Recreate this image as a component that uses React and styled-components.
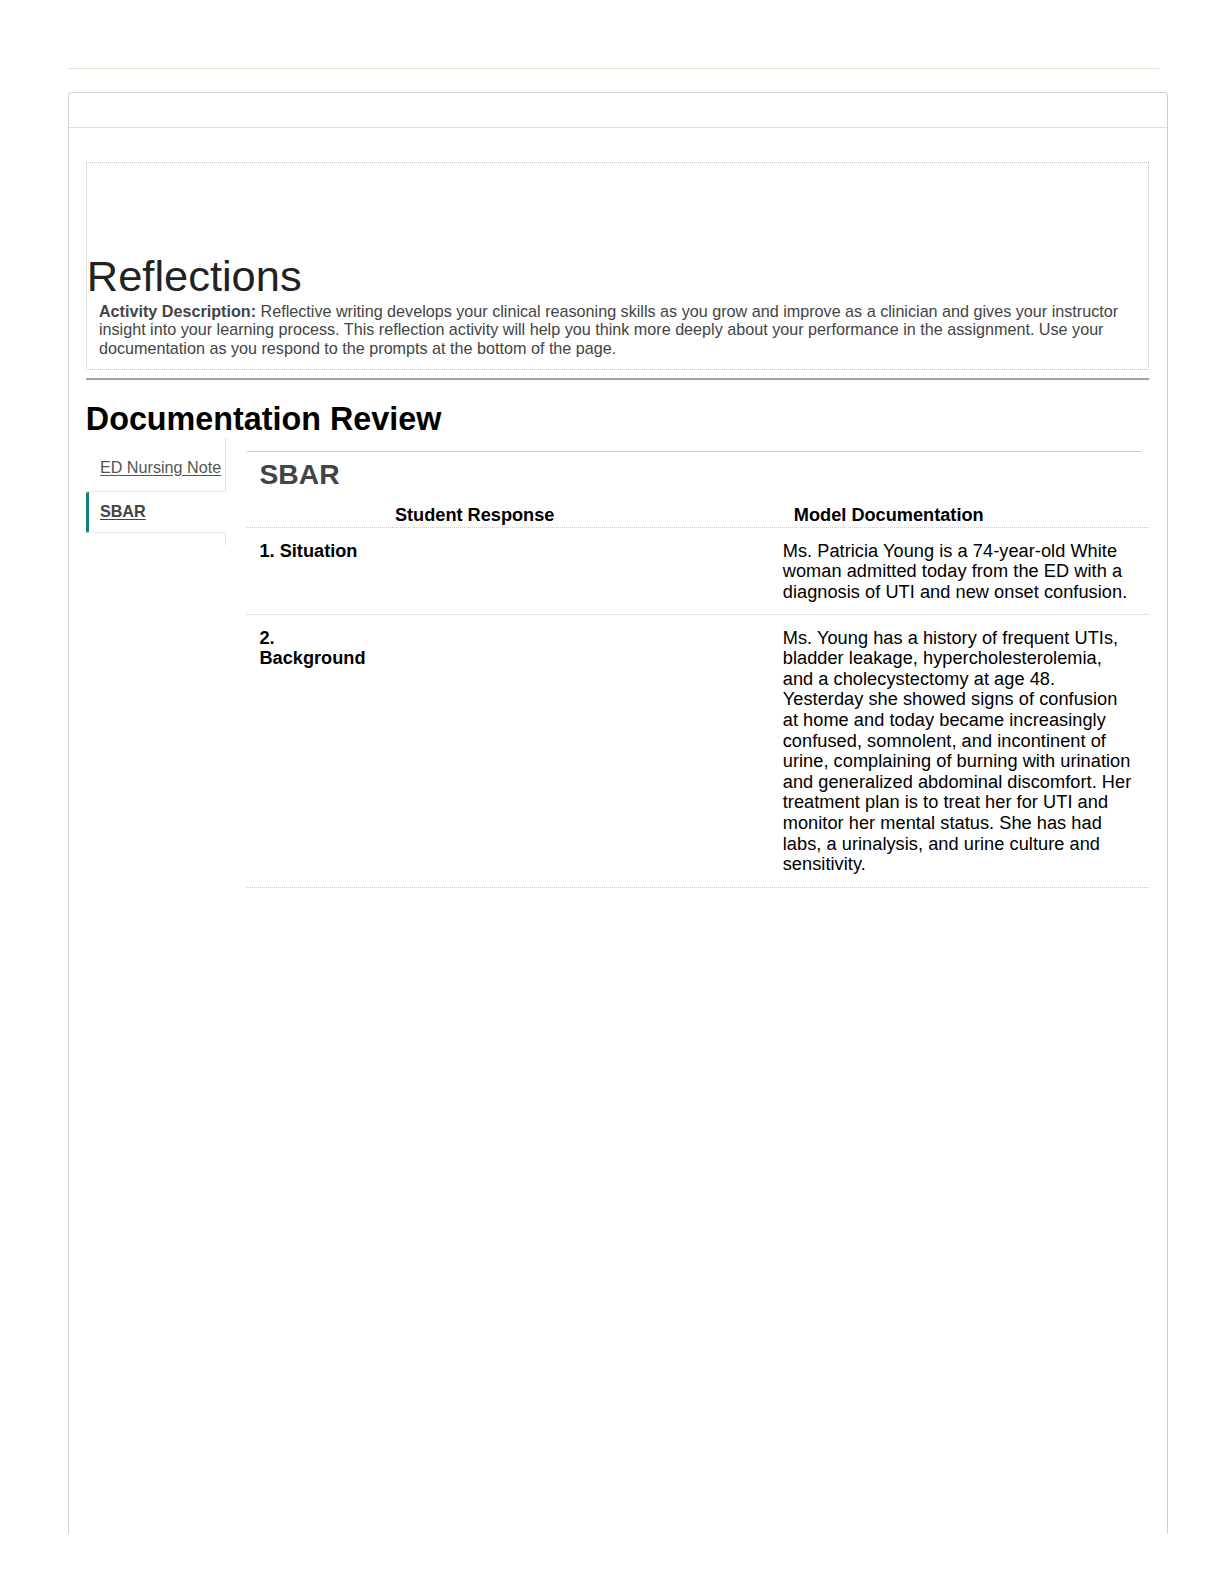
import React from "react";
import styled, { createGlobalStyle } from "styled-components";

const GlobalStyle = createGlobalStyle`
  html, body {
    margin: 0;
    padding: 0;
    background: #ffffff;
    font-family: "Liberation Sans", Arial, Helvetica, sans-serif;
  }
  * { box-sizing: border-box; }
`;

const Page = styled.div`
  zoom: 1.01;
  padding-top: 67px;
`;

const TopRule = styled.div`
  margin-left: 66px;
  width: 1082px;
  border-top: 1px solid #e2e5cf;
`;

const Panel = styled.section`
  margin: 23px 0 0 67px;
  width: 1089px;
  height: 1428px;
  border: 1px solid #cfcfcf;
  border-bottom: none;
  border-radius: 4px 4px 0 0;
`;

const PanelHeader = styled.div`
  height: 35px;
  border-bottom: 1px solid #dedede;
`;

const PanelBody = styled.div`
  padding: 33px 17px 0 17px;
`;

const IntroBox = styled.div`
  border: 1px dotted #c4c4c4;
  padding: 89px 0 11px 0;
`;

const Title = styled.h1`
  margin: 0;
  font-size: 43px;
  line-height: 49px;
  font-weight: 400;
  color: #222;
`;

const Description = styled.p`
  margin: 0;
  padding: 0 12px;
  font-size: 16px;
  line-height: 18.4px;
  color: #444;

  strong {
    font-weight: 700;
  }
`;

const Divider = styled.div`
  margin-top: 8px;
  border-top: 2px solid #a3a3a3;
`;

const SectionTitle = styled.h2`
  margin: 20px 0 0 0;
  font-size: 32px;
  line-height: 38px;
  font-weight: 700;
  color: #000;
`;

const ReviewLayout = styled.div`
  display: flex;
  gap: 21px;
  align-items: flex-start;
`;

const TabList = styled.nav`
  width: 139px;
  flex: none;
  display: flex;
  flex-direction: column;
`;

const Tab = styled.a`
  display: block;
  white-space: nowrap;
  font-size: 16px;
  line-height: 19.2px;
  color: ${(p) => (p.$active ? "#444" : "#555")};
  font-weight: ${(p) => (p.$active ? 700 : 400)};
  text-decoration: underline;
  text-underline-offset: 2px;
  border-bottom: 1px solid #ececec;
  border-right: ${(p) => (p.$active ? "1px solid transparent" : "1px solid #dcdcdc")};
  border-left: ${(p) => (p.$active ? "3px solid #16807c" : "none")};
  border-radius: ${(p) => (p.$active ? "2px 0 0 2px" : "0")};
  padding: ${(p) => (p.$first ? "19px 4px 14px 14px" : p.$active ? "10px 4px 10px 11px" : "10px 4px 10px 14px")};
  cursor: pointer;
`;

const TabFiller = styled.div`
  height: 12px;
  border-right: 1px solid #dcdcdc;
`;

const Content = styled.div`
  flex: 1;
  padding-top: 12px;
`;

const ContentRule = styled.div`
  margin-right: 8px;
  border-top: 1px solid #cccccc;
`;

const SubTitle = styled.h3`
  margin: 6px 0 0 12px;
  font-size: 28px;
  line-height: 33.6px;
  font-weight: 700;
  color: #444;
`;

const HeaderRow = styled.div`
  margin-top: 13px;
  display: grid;
  grid-template-columns: 1fr 375px;
  border-bottom: 1px dotted #cccccc;
  padding-bottom: 1px;
`;

const HeaderCell = styled.div`
  font-size: 18px;
  line-height: 21.6px;
  font-weight: 700;
  color: #000;
  text-align: ${(p) => p.$align || "left"};
  padding: ${(p) => p.$pad || "0"};
`;

const Row = styled.div`
  display: grid;
  grid-template-columns: 134px 1fr 375px;
  border-bottom: 1px dotted #cccccc;
`;

const Cell = styled.div`
  font-size: 18px;
  line-height: 20.4px;
  color: #000;
  letter-spacing: ${(p) => (p.$model ? "0.05px" : "0")};
  font-weight: ${(p) => (p.$bold ? 700 : 400)};
  padding: ${(p) => (p.$model ? "12px 15px 12px 12px" : "12px")};
`;

const rows = [
  {
    label: "1. Situation",
    student: "",
    model:
      "Ms. Patricia Young is a 74-year-old White woman admitted today from the ED with a diagnosis of UTI and new onset confusion.",
  },
  {
    label: "2. Background",
    student: "",
    model:
      "Ms. Young has a history of frequent UTIs, bladder leakage, hypercholesterolemia, and a cholecystectomy at age 48. Yesterday she showed signs of confusion at home and today became increasingly confused, somnolent, and incontinent of urine, complaining of burning with urination and generalized abdominal discomfort. Her treatment plan is to treat her for UTI and monitor her mental status. She has had labs, a urinalysis, and urine culture and sensitivity.",
  },
];

export default function App() {
  return (
    <Page>
      <GlobalStyle />
      <TopRule />
      <Panel>
        <PanelHeader />
        <PanelBody>
          <IntroBox>
            <Title>Reflections</Title>
            <Description>
              <strong>Activity Description:</strong> Reflective writing develops your clinical
              reasoning skills as you grow and improve as a clinician and gives your instructor
              insight into your learning process. This reflection activity will help you think more
              deeply about your performance in the assignment. Use your documentation as you respond
              to the prompts at the bottom of the page.
            </Description>
          </IntroBox>
          <Divider />
          <SectionTitle>Documentation Review</SectionTitle>
          <ReviewLayout>
            <TabList>
              <Tab $first>ED Nursing Note</Tab>
              <Tab $active>SBAR</Tab>
              <TabFiller />
            </TabList>
            <Content>
              <ContentRule />
              <SubTitle>SBAR</SubTitle>
              <HeaderRow>
                <HeaderCell $align="center" $pad="0 68px 0 0">
                  Student Response
                </HeaderCell>
                <HeaderCell $pad="0 0 0 23px">Model Documentation</HeaderCell>
              </HeaderRow>
              {rows.map((r) => (
                <Row key={r.label}>
                  <Cell $bold>{r.label}</Cell>
                  <Cell>{r.student}</Cell>
                  <Cell $model>{r.model}</Cell>
                </Row>
              ))}
            </Content>
          </ReviewLayout>
        </PanelBody>
      </Panel>
    </Page>
  );
}
